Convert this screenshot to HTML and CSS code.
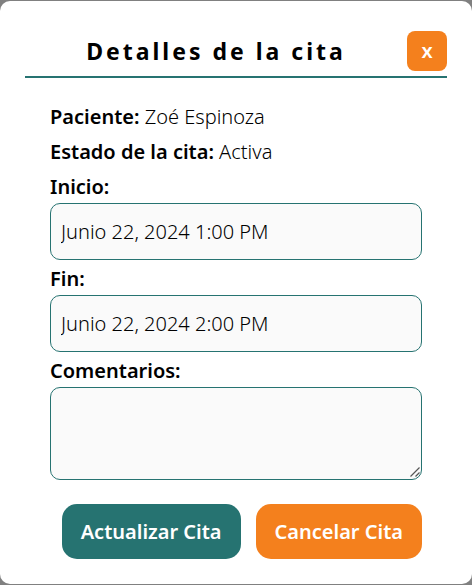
FILE: index.html
```html
<!DOCTYPE html>
<html lang="es">
<head>
<meta charset="utf-8">
<meta name="viewport" content="width=device-width, initial-scale=1">
<title>Detalles de la cita</title>
<link rel="stylesheet" href="styles.css">
</head>
<body>
<main class="modal">
  <header class="modal-header">
    <h1 class="modal-title">Detalles de la cita</h1>
    <button class="button button-close" type="button">x</button>
  </header>
  <form class="details">
    <p class="row"><strong class="label">Paciente:</strong> Zoé Espinoza</p>
    <p class="row"><strong class="label">Estado de la cita:</strong> Activa</p>
    <div class="field">
      <label class="label" for="inicio">Inicio:</label>
      <input class="control" id="inicio" type="text" value="Junio 22, 2024 1:00 PM">
    </div>
    <div class="field">
      <label class="label" for="fin">Fin:</label>
      <input class="control" id="fin" type="text" value="Junio 22, 2024 2:00 PM">
    </div>
    <div class="field">
      <label class="label" for="comentarios">Comentarios:</label>
      <div class="comments-box">
        <textarea class="control comments" id="comentarios"></textarea>
        <svg class="grip" viewBox="0 0 10 10" aria-hidden="true"><path d="M0.5 9.5 9.5 0.5M5.5 9.5 9.5 5.5"/></svg>
      </div>
    </div>
    <div class="actions">
      <button class="button button-update" type="button">Actualizar Cita</button>
      <button class="button button-cancel" type="button">Cancelar Cita</button>
    </div>
  </form>
</main>
</body>
</html>
```
FILE: styles.css
```css
* {
  box-sizing: border-box;
}

body {
  margin: 0;
  padding: 1px 0;
  background: #808080;
  color: #000;
  font-family: "Noto Sans", "Open Sans", sans-serif;
  font-size: 20px;
  font-weight: 300;
  line-height: 24px;
}

.modal {
  padding: 30px 25px 25px;
  border-radius: 10px;
  background: #fff;
}

.modal-header {
  display: flex;
  align-items: center;
  padding-bottom: 5px;
  border-bottom: 2px solid #267371;
}

.modal-title {
  flex: 1;
  margin: 0;
  font-size: 23px;
  font-weight: 700;
  letter-spacing: 3px;
  text-align: center;
}

.button {
  border: 0;
  color: #fff;
  font: inherit;
  font-weight: 600;
  cursor: pointer;
}

.button-close {
  width: 40px;
  height: 40px;
  padding: 0;
  border-radius: 8px;
  background: #f4801d;
}

.details {
  padding: 27px 25px 0;
}

.row {
  margin: 0 0 11px;
}

.label {
  font-weight: 600;
}

.field {
  display: flex;
  flex-direction: column;
  gap: 4px;
  margin-bottom: 7px;
}

.control {
  display: block;
  width: 100%;
  height: 57px;
  padding: 10px;
  border: 1px solid #267371;
  border-radius: 10px;
  background: #fafafa;
  color: #000;
  font: inherit;
}

.comments-box {
  position: relative;
}

.comments {
  height: 93px;
  resize: none;
}

.grip {
  position: absolute;
  right: 2px;
  bottom: 3px;
  width: 10px;
  height: 10px;
  fill: none;
  stroke: #555;
  stroke-width: 1.2;
  pointer-events: none;
}

.actions {
  display: flex;
  justify-content: flex-end;
  gap: 15px;
  margin-top: 24px;
}

.button-update,
.button-cancel {
  height: 55px;
  padding: 0 19px;
  border-radius: 15px;
}

.button-update {
  background: #267371;
}

.button-cancel {
  background: #f4801d;
}
```
